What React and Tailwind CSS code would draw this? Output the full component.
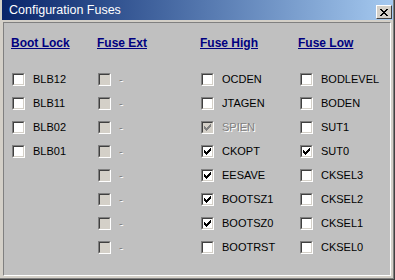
import React from "react";

const CHECK = [
  "......X",
  ".....XX",
  "X...XXX",
  "XX.XXX.",
  "XXXXX..",
  ".XXX...",
  "..X....",
];

function CheckMark({ color }) {
  const rects = [];
  CHECK.forEach((row, y) =>
    row.split("").forEach((c, x) => {
      if (c === "X") rects.push(<rect key={x + "-" + y} x={x} y={y} width="1" height="1" fill={color} />);
    })
  );
  return (
    <svg width="7" height="7" viewBox="0 0 7 7" shapeRendering="crispEdges" className="block">
      {rects}
    </svg>
  );
}

function Box({ checked, disabled }) {
  return (
    <div className="w-[13px] h-[13px] shrink-0 border border-t-[#808080] border-l-[#808080] border-r-white border-b-white">
      <div
        className={
          "w-full h-full border border-t-[#404040] border-l-[#404040] border-r-[#d4d0c8] border-b-[#d4d0c8] flex items-center justify-center " +
          (disabled ? "bg-[#d4d0c8]" : "bg-white")
        }
      >
        {checked && <CheckMark color={disabled ? "#808080" : "#000000"} />}
      </div>
    </div>
  );
}

function Row({ label, checked, disabled, dash }) {
  return (
    <div className="h-[24px] flex items-center">
      <Box checked={checked} disabled={disabled} />
      <span
        className={
          "ml-[8px] text-[11px] leading-[13px] whitespace-nowrap " +
          (disabled ? "text-[#808080] [text-shadow:1px_1px_0_#ffffff]" : "text-black")
        }
      >
        {dash ? "-" : label}
      </span>
    </div>
  );
}

function Column({ title, width, rows, boxIndent }) {
  return (
    <div className={"flex flex-col shrink-0 " + width}>
      <div className="text-[12px] leading-[14px] font-bold text-[#000080] underline whitespace-nowrap">{title}</div>
      <div className={"mt-[17px] flex flex-col " + boxIndent}>
        {rows.map((r, i) => (
          <Row key={i} {...r} />
        ))}
      </div>
    </div>
  );
}

export default function App() {
  const bootLock = [{ label: "BLB12" }, { label: "BLB11" }, { label: "BLB02" }, { label: "BLB01" }];
  const fuseExt = Array.from({ length: 8 }, () => ({ dash: true, disabled: true }));
  const fuseHigh = [
    { label: "OCDEN" },
    { label: "JTAGEN" },
    { label: "SPIEN", checked: true, disabled: true },
    { label: "CKOPT", checked: true },
    { label: "EESAVE", checked: true },
    { label: "BOOTSZ1", checked: true },
    { label: "BOOTSZ0", checked: true },
    { label: "BOOTRST" },
  ];
  const fuseLow = [
    { label: "BODLEVEL" },
    { label: "BODEN" },
    { label: "SUT1" },
    { label: "SUT0", checked: true },
    { label: "CKSEL3" },
    { label: "CKSEL2" },
    { label: "CKSEL1" },
    { label: "CKSEL0" },
  ];
  return (
    <div
      className="w-[395px] h-[280px] bg-[#d4d0c8] border-r border-b border-[#404040] flex flex-col"
      style={{ fontFamily: '"Liberation Sans", Arial, sans-serif' }}
    >
      <div className="flex-1 flex flex-col border-r border-b border-[#808080] pl-[2px] pb-[2px]">
        <div className="h-[20px] flex items-center justify-between bg-gradient-to-r from-[#0a246a] to-[#a6caf0] pl-[7px] pr-[1px]">
          <span className="text-white text-[12.5px] leading-[14px]">Configuration Fuses</span>
          <div className="mt-[4px] w-[16px] h-[14px] bg-[#d4d0c8] border border-t-white border-l-white border-r-[#404040] border-b-[#404040] flex items-center justify-center">
            <svg width="8" height="7" viewBox="0 0 8 7" shapeRendering="crispEdges">
              <path d="M0 0h2v1h-2zM6 0h2v1h-2zM1 1h2v1h-2zM5 1h2v1h-2zM2 2h4v1h-4zM3 3h2v1h-2zM2 4h4v1h-4zM1 5h2v1h-2zM5 5h2v1h-2zM0 6h2v1h-2zM6 6h2v1h-2z" fill="#000" />
            </svg>
          </div>
        </div>
        <div className="flex-1 mt-[2px] ml-[1px] mr-[2px] bg-[#c0c0c0] border border-t-[#808080] border-l-[#808080] border-r-white border-b-white pl-[7px] pt-[13px] flex">
          <Column title="Boot Lock" width="w-[86px]" rows={bootLock} boxIndent="ml-[1px]" />
          <Column title="Fuse Ext" width="w-[103px]" rows={fuseExt} boxIndent="ml-[1px]" />
          <Column title="Fuse High" width="w-[98px]" rows={fuseHigh} boxIndent="ml-[1px]" />
          <Column title="Fuse Low" width="w-[80px]" rows={fuseLow} boxIndent="ml-[2px]" />
        </div>
      </div>
    </div>
  );
}
